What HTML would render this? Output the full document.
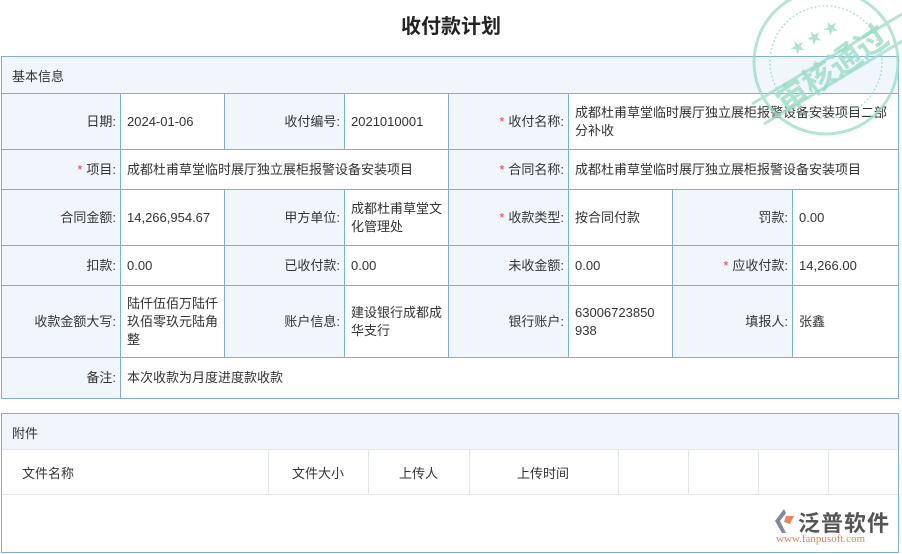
<!DOCTYPE html>
<html><head><meta charset="utf-8"><style>
*{margin:0;padding:0;box-sizing:border-box}
body{width:902px;height:554px;background:#fff;font-family:"Liberation Sans","Noto Sans CJK SC",sans-serif;font-size:13px;color:#333;position:relative;overflow:hidden}
.a{position:absolute}
.c{position:absolute;border-right:1px solid #82acd9;border-bottom:1px solid #82acd9;display:flex;align-items:center;line-height:18px;padding:0 6px}
.l{background:#f1f6fd;justify-content:flex-end;padding-right:4px}
.v{background:#fff}
.r{color:#e33;margin-right:4px}
</style></head><body>
<div class="a" style="left:0;top:10px;width:902px;text-align:center;font-size:20px;font-weight:bold;color:#222">收付款计划</div>
<div class="a" style="left:1px;top:56px;width:898px;height:343px;border:1px solid #82acd9"></div>
<div class="a" style="left:2px;top:57px;width:896px;height:37px;background:#f1f6fd;border-bottom:1px solid #82acd9;padding:9px 10px;">基本信息</div>
<!-- row1 -->
<div class="c l" style="left:2px;top:94px;width:119px;height:56px">日期:</div>
<div class="c v" style="left:121px;top:94px;width:104px;height:56px">2024-01-06</div>
<div class="c l" style="left:225px;top:94px;width:120px;height:56px">收付编号:</div>
<div class="c v" style="left:345px;top:94px;width:104px;height:56px">2021010001</div>
<div class="c l" style="left:449px;top:94px;width:120px;height:56px"><span class="r">*</span>收付名称:</div>
<div class="c v" style="left:569px;top:94px;width:329px;height:56px;border-right:none">成都杜甫草堂临时展厅独立展柜报警设备安装项目二部分补收</div>
<!-- row2 -->
<div class="c l" style="left:2px;top:150px;width:119px;height:40px"><span class="r">*</span>项目:</div>
<div class="c v" style="left:121px;top:150px;width:328px;height:40px">成都杜甫草堂临时展厅独立展柜报警设备安装项目</div>
<div class="c l" style="left:449px;top:150px;width:120px;height:40px"><span class="r">*</span>合同名称:</div>
<div class="c v" style="left:569px;top:150px;width:329px;height:40px;border-right:none">成都杜甫草堂临时展厅独立展柜报警设备安装项目</div>
<!-- row3 -->
<div class="c l" style="left:2px;top:190px;width:119px;height:56px">合同金额:</div>
<div class="c v" style="left:121px;top:190px;width:104px;height:56px">14,266,954.67</div>
<div class="c l" style="left:225px;top:190px;width:120px;height:56px">甲方单位:</div>
<div class="c v" style="left:345px;top:190px;width:104px;height:56px">成都杜甫草堂文化管理处</div>
<div class="c l" style="left:449px;top:190px;width:120px;height:56px"><span class="r">*</span>收款类型:</div>
<div class="c v" style="left:569px;top:190px;width:104px;height:56px">按合同付款</div>
<div class="c l" style="left:673px;top:190px;width:120px;height:56px">罚款:</div>
<div class="c v" style="left:793px;top:190px;width:105px;height:56px;border-right:none">0.00</div>
<!-- row4 -->
<div class="c l" style="left:2px;top:246px;width:119px;height:40px">扣款:</div>
<div class="c v" style="left:121px;top:246px;width:104px;height:40px">0.00</div>
<div class="c l" style="left:225px;top:246px;width:120px;height:40px">已收付款:</div>
<div class="c v" style="left:345px;top:246px;width:104px;height:40px">0.00</div>
<div class="c l" style="left:449px;top:246px;width:120px;height:40px">未收金额:</div>
<div class="c v" style="left:569px;top:246px;width:104px;height:40px">0.00</div>
<div class="c l" style="left:673px;top:246px;width:120px;height:40px"><span class="r">*</span>应收付款:</div>
<div class="c v" style="left:793px;top:246px;width:105px;height:40px;border-right:none">14,266.00</div>
<!-- row5 -->
<div class="c l" style="left:2px;top:286px;width:119px;height:72px">收款金额大写:</div>
<div class="c v" style="left:121px;top:286px;width:104px;height:72px">陆仟伍佰万陆仟玖佰零玖元陆角整</div>
<div class="c l" style="left:225px;top:286px;width:120px;height:72px">账户信息:</div>
<div class="c v" style="left:345px;top:286px;width:104px;height:72px">建设银行成都成华支行</div>
<div class="c l" style="left:449px;top:286px;width:120px;height:72px">银行账户:</div>
<div class="c v" style="left:569px;top:286px;width:104px;height:72px;word-break:break-all;padding-right:12px">63006723850938</div>
<div class="c l" style="left:673px;top:286px;width:120px;height:72px">填报人:</div>
<div class="c v" style="left:793px;top:286px;width:105px;height:72px;border-right:none">张鑫</div>
<!-- row6 -->
<div class="c l" style="left:2px;top:358px;width:119px;height:40px;border-bottom:none">备注:</div>
<div class="c v" style="left:121px;top:358px;width:777px;height:40px;border-right:none;border-bottom:none">本次收款为月度进度款收款</div>

<!-- stamp -->
<svg class="a" style="left:730px;top:-14px" width="172" height="160" viewBox="0 0 172 160">
<g fill="none" stroke="#9adcc6" stroke-width="3" opacity="0.75">
<circle cx="96" cy="76" r="72"/><circle cx="96" cy="76" r="56" stroke-width="1.5" stroke-dasharray="2 2"/>
<path d="M22 118 L172 28 M34 138 L184 48"/>
</g>
<text x="100" y="95" fill="#9adcc6" font-size="32" font-weight="bold" transform="rotate(-35 100 80)" text-anchor="middle" font-family="Noto Sans CJK SC,sans-serif" opacity="0.8">审核通过</text>
<text x="60" y="65" fill="#9adcc6" font-size="15" opacity="0.8" transform="rotate(-30 70 60)">★ ★ ★</text>
</svg>

<!-- attachments -->
<div class="a" style="left:1px;top:413px;width:898px;height:140px;border:1px solid #82acd9"></div>
<div class="a" style="left:2px;top:414px;width:896px;height:36px;background:#f1f6fd;border-bottom:1px solid #e2e6ea;padding:9px 10px">附件</div>
<div class="a" style="left:2px;top:450px;width:896px;height:45px;border-bottom:1px solid #e2e6ea"></div>
<div class="a" style="left:268px;top:450px;width:1px;height:45px;background:#e2e6ea"></div>
<div class="a" style="left:368px;top:450px;width:1px;height:45px;background:#e2e6ea"></div>
<div class="a" style="left:469px;top:450px;width:1px;height:45px;background:#e2e6ea"></div>
<div class="a" style="left:618px;top:450px;width:1px;height:45px;background:#e2e6ea"></div>
<div class="a" style="left:688px;top:450px;width:1px;height:45px;background:#e2e6ea"></div>
<div class="a" style="left:758px;top:450px;width:1px;height:45px;background:#e2e6ea"></div>
<div class="a" style="left:828px;top:450px;width:1px;height:45px;background:#e2e6ea"></div>
<div class="a" style="left:22px;top:463px">文件名称</div>
<div class="a" style="left:292px;top:463px">文件大小</div>
<div class="a" style="left:399px;top:463px">上传人</div>
<div class="a" style="left:517px;top:463px">上传时间</div>
<!-- logo -->
<svg class="a" style="left:772px;top:508px" width="24" height="26" viewBox="0 0 24 26"><path d="M12 1 L3 13 L10 25 L14 25 L8 13 L14 5Z" fill="#7f8aa0"/><path d="M14 8 L22 8 L18 16 L12 14Z" fill="#e8875c"/></svg>
<div class="a" style="left:798px;top:506px;font-size:22px;color:#555;font-weight:bold;letter-spacing:1px">泛普软件</div>
<div class="a" style="left:776px;top:533px;font-size:11px;color:#e0845a;font-family:'Liberation Serif',serif">www.fanpusoft.com</div>
</body></html>
